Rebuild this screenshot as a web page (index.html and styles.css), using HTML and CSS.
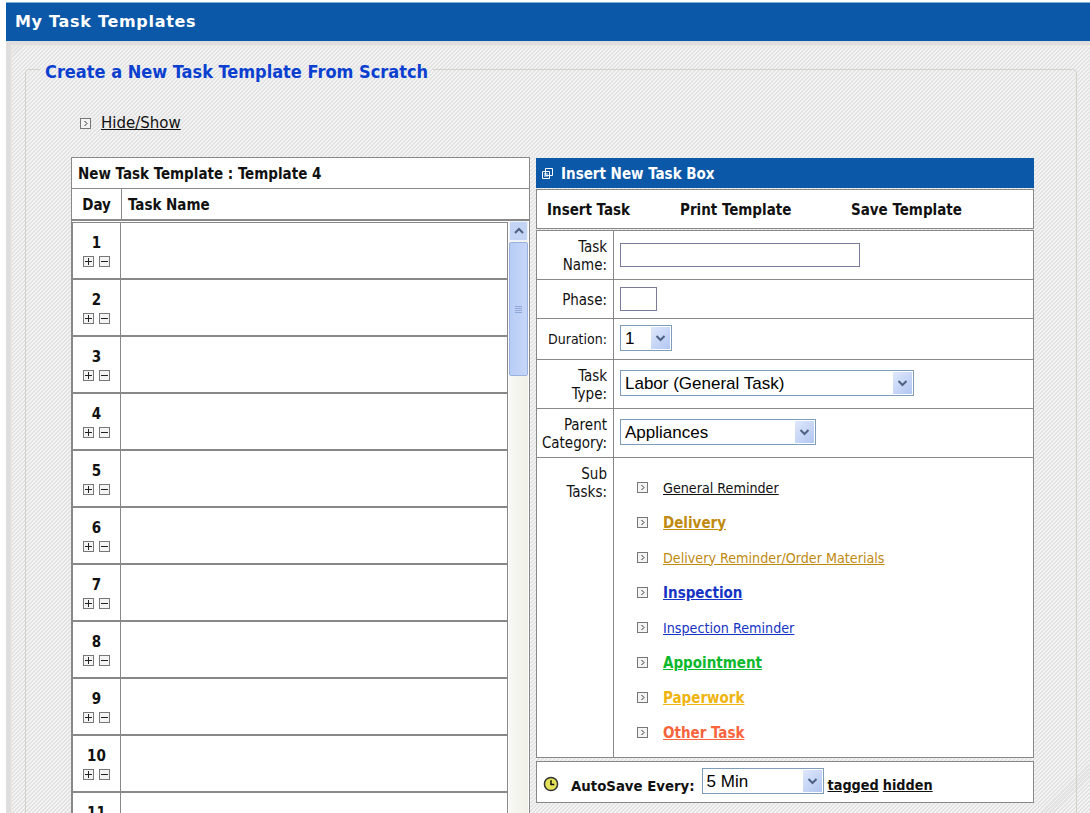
FILE: index.html
```html
<!DOCTYPE html>
<html lang="en">
<head>
  <meta charset="UTF-8">
  <title>My Task Templates</title>
  <link rel="stylesheet" href="styles.css">
</head>
<body>
  <svg width="0" height="0" class="defs">
    <symbol id="exp" viewBox="0 0 11 11"><rect x=".5" y=".5" width="10" height="10" fill="#f4f4f4" stroke="#777"/><path d="M4.5 3l2.5 2.5L4.5 8" fill="none" stroke="#333"/></symbol>
    <symbol id="plus" viewBox="0 0 11 11"><rect x=".5" y=".5" width="10" height="10" fill="#f4f4f4" stroke="#777"/><path d="M2 5.5h7M5.5 2v7" stroke="#222"/></symbol>
    <symbol id="minus" viewBox="0 0 11 11"><rect x=".5" y=".5" width="10" height="10" fill="#f4f4f4" stroke="#777"/><path d="M2 5.5h7" stroke="#222"/></symbol>
    <symbol id="down" viewBox="0 0 19 21"><path d="M5.5 8.5l4 4 4-4" fill="none" stroke="#4d6185" stroke-width="2"/></symbol>
  </svg>

  <div class="page">
    <h1 class="topbar">My Task Templates</h1>
    <div class="panel">
      <fieldset class="frame">
        <legend>Create a New Task Template From Scratch</legend>
        <div class="inner">
          <div class="hideshow">
            <svg class="ico"><use href="#exp"/></svg>
            <a href="#">Hide/Show</a>
          </div>

          <div class="columns">
            <div class="left">
              <div class="left-title">New Task Template : Template 4</div>
              <div class="left-head">
                <div class="head-day">Day</div>
                <div class="head-name">Task Name</div>
              </div>
              <div class="left-body">
                <div class="days" id="days"></div>
                <div class="scrollbar">
                  <div class="sb-up"><svg width="12" height="8" viewBox="0 0 12 8"><path d="M2 6l4-4 4 4" fill="none" stroke="#4d6185" stroke-width="2"/></svg></div>
                  <div class="sb-thumb"><span class="grip"></span></div>
                </div>
              </div>
            </div>

            <div class="right">
              <div class="box-title">
                <svg width="11" height="11" viewBox="0 0 11 11"><path d="M3.5.5h7v7h-7zM.5 3.5h7v7h-7z" fill="#0b58a8" stroke="#fff"/><path d="M2 6h4M2 8h4" stroke="#fff"/></svg>
                <span>Insert New Task Box</span>
              </div>
              <div class="toolbar">
                <span class="tool-a">Insert Task</span>
                <span class="tool-b">Print Template</span>
                <span>Save Template</span>
              </div>
              <div class="form">
                <div class="row row-name">
                  <label class="cap">Task<br>Name:</label>
                  <div class="val"><input class="txt-name" type="text"></div>
                </div>
                <div class="row row-phase">
                  <label class="cap">Phase:</label>
                  <div class="val"><input class="txt-phase" type="text"></div>
                </div>
                <div class="row row-dur">
                  <label class="cap">Duration:</label>
                  <div class="val">
                    <div class="select sel-dur"><select><option>1</option></select><svg class="arrow"><use href="#down"/></svg></div>
                  </div>
                </div>
                <div class="row row-name">
                  <label class="cap">Task<br>Type:</label>
                  <div class="val">
                    <div class="select sel-type"><select><option>Labor (General Task)</option></select><svg class="arrow"><use href="#down"/></svg></div>
                  </div>
                </div>
                <div class="row row-name">
                  <label class="cap">Parent<br>Category:</label>
                  <div class="val">
                    <div class="select sel-cat"><select><option>Appliances</option></select><svg class="arrow"><use href="#down"/></svg></div>
                  </div>
                </div>
                <div class="row row-sub">
                  <label class="cap">Sub<br>Tasks:</label>
                  <ul class="subtasks">
                    <li><svg class="ico"><use href="#exp"/></svg><a href="#" class="c-black">General Reminder</a></li>
                    <li><svg class="ico"><use href="#exp"/></svg><a href="#" class="c-gold b">Delivery</a></li>
                    <li><svg class="ico"><use href="#exp"/></svg><a href="#" class="c-gold">Delivery Reminder/Order Materials</a></li>
                    <li><svg class="ico"><use href="#exp"/></svg><a href="#" class="c-blue b">Inspection</a></li>
                    <li><svg class="ico"><use href="#exp"/></svg><a href="#" class="c-blue">Inspection Reminder</a></li>
                    <li><svg class="ico"><use href="#exp"/></svg><a href="#" class="c-green b">Appointment</a></li>
                    <li><svg class="ico"><use href="#exp"/></svg><a href="#" class="c-yellow b">Paperwork</a></li>
                    <li><svg class="ico"><use href="#exp"/></svg><a href="#" class="c-orange b">Other Task</a></li>
                  </ul>
                </div>
              </div>
              <div class="autosave">
                <svg class="clock" width="16" height="16" viewBox="0 0 17 17"><circle cx="8.5" cy="8.5" r="7" fill="#e4e25a" stroke="#333" stroke-width="1.6"/><path d="M8.5 4.5v4.5h3.5" fill="none" stroke="#111" stroke-width="1.6"/></svg>
                <span class="as-label">AutoSave Every:</span>
                <div class="select sel-save"><select><option>5 Min</option></select><svg class="arrow"><use href="#down"/></svg></div>
                <a href="#">tagged</a>
                <a href="#">hidden</a>
              </div>
            </div>
          </div>
        </div>
      </fieldset>
    </div>
  </div>

  <script>
    var html = '';
    for (var i = 1; i <= 12; i++) {
      html += '<div class="day"><div class="day-num"><b>' + i + '</b><span class="pm">' +
        '<svg class="ico"><use href="#plus"/></svg><svg class="ico"><use href="#minus"/></svg></span></div>' +
        '<div class="day-task"></div></div>';
    }
    document.getElementById('days').innerHTML = html;
  </script>
</body>
</html>
```

FILE: styles.css
```css
html, body { margin: 0; height: 813px; overflow: hidden; background: #fff; }
body { font-family: "DejaVu Sans Condensed", "DejaVu Sans", sans-serif; font-size: 14px; color: #111; }
a { color: inherit; }
.defs { position: absolute; }
.ico { width: 11px; height: 11px; display: block; flex: none; }

.page { margin: 2px 0 0 6px; background: #dedede; height: 811px; }
.topbar { margin: 0; padding-left: 9px; background: #0b58a8; border-top: 1px solid #7fb2d8; color: #fff; font: bold 16px/38px "DejaVu Sans", sans-serif; letter-spacing: .7px; }

.panel {
  margin: 4px 0 0 5px; padding: 0 13px 40px 13px; height: 800px;
  border-left: 1px solid #eee8dc; border-top: 1px solid #eee8dc;
  background: repeating-linear-gradient(135deg, #f4f4f4 0, #f4f4f4 1.41px, #e2e2e2 1.41px, #e2e2e2 2.83px);
}
.frame { margin: 9px 0 0 0; padding: 0; border: 1px solid #d2d2ca; border-radius: 4px; min-width: 0; }
.frame legend { margin-left: 14px; padding: 6px 5px 0; color: #0a3fd0; font-size: 18px; font-weight: bold; line-height: 22px; }
.inner { padding-left: 45px; }

.hideshow { display: flex; align-items: center; gap: 10px; margin: 30px 0 0 9px; height: 20px; font: 15px "DejaVu Sans", sans-serif; }

.columns { display: flex; gap: 6px; margin-top: 24px; }

.left { width: 457px; background: #fff; border: 1px solid #888; border-bottom: 0; flex: none; }
.left-title { height: 30px; line-height: 32px; padding-left: 6px; font-size: 15px; font-weight: bold; border-bottom: 1px solid #888; }
.left-head { display: flex; height: 30px; line-height: 32px; font-weight: bold; font-size: 15px; }
.head-day { width: 49px; text-align: center; border-right: 1px solid #888; }
.head-name { padding-left: 6px; }
.left-body { display: flex; border-top: 2px solid #888; padding-top: 1px; height: 700px; overflow: hidden; }
.days { width: 436px; flex: none; }
.day { display: flex; height: 55px; border: 1px solid #888; }
.day-num { width: 48px; flex: none; border-right: 1px solid #888; display: flex; flex-direction: column; align-items: center; padding-top: 12px; box-sizing: border-box; font-size: 15px; line-height: 17px; }
.pm { display: flex; gap: 5px; margin-top: 4px; }
.day-task { flex: 1; }

.scrollbar { width: 19px; margin: -1px 0 0 1px; background: linear-gradient(90deg, #f8f8f4, #f1f1ea); }
.sb-up { height: 20px; display: flex; align-items: center; justify-content: center; background: #c4d4f4; border: 1px solid #eef2fb; box-sizing: border-box; border-radius: 2px; }
.sb-thumb { margin-top: 1px; height: 134px; display: flex; align-items: center; justify-content: center; background: linear-gradient(90deg, #b9cdf5, #c6d6f8); border: 1px solid #98b1e0; border-radius: 2px; box-sizing: border-box; }
.grip { width: 7px; height: 7px; background: repeating-linear-gradient(180deg, #8fa8d8 0, #8fa8d8 1px, transparent 1px, transparent 2px); }

.right { width: 498px; flex: none; margin-top: 1px; }
.box-title { display: flex; align-items: center; gap: 8px; height: 30px; padding-left: 6px; background: #0b58a8; color: #fff; font-size: 15px; font-weight: bold; }
.box-title span { padding-top: 2px; }
.toolbar { display: flex; align-items: center; height: 38px; line-height: 20px; padding: 0 0 0 10px; margin-top: 1px; background: #fff; border: 1px solid #888; font-size: 15px; font-weight: bold; }
.toolbar span { padding-top: 2px; }
.tool-a { width: 133px; }
.tool-b { width: 171px; }

.form { margin-top: 1px; background: #fff; border: 1px solid #888; }
.row { display: flex; border-bottom: 1px solid #888; }
.row:last-child { border-bottom: 0; }
.row-name { height: 48px; }
.row-phase { height: 38px; }
.row-dur { height: 40px; }
.row-sub { height: 299px; }
.cap { width: 70px; padding: 7px 6px 0 0; flex: none; text-align: right; border-right: 1px solid #888; line-height: 18px; font-size: 15px; }
.row-phase .cap, .row-dur .cap { padding-top: 11px; }
.row-dur .cap { font-size: 14px; }
.val { display: flex; align-items: center; padding-left: 6px; }

input { box-sizing: border-box; border: 1px solid #7a7a9a; background: #fff; padding: 0; margin: 0; border-radius: 0; }
.txt-name { width: 240px; height: 24px; }
.txt-phase { width: 37px; height: 24px; }

.select { position: relative; height: 26px; box-sizing: border-box; border: 1px solid #7f9db9; background: #fff; margin-top: -2px; }
.select select { appearance: none; border: 0; outline: 0; width: 100%; height: 100%; padding: 0 0 0 4px; background: transparent; font: 17px "Liberation Sans", sans-serif; color: #000; display: block; }
.arrow { position: absolute; right: 1px; top: 1px; width: 19px; height: 22px; background: linear-gradient(135deg, #dfe8fb, #b2c6f2); pointer-events: none; }
.sel-dur { width: 52px; }
.sel-type { width: 294px; }
.sel-cat { width: 196px; }
.sel-save { width: 122px; }

.subtasks { list-style: none; margin: 0; padding: 12px 0 0 23px; font-size: 14.2px; }
.subtasks li { display: flex; align-items: center; gap: 15px; height: 35px; }
.b { font-weight: bold; font-size: 15px; }
.c-black { color: #111; }
.c-gold { color: #c08a10; }
.c-blue { color: #1634c4; }
.c-green { color: #0cb82c; }
.c-yellow { color: #f0b410; }
.c-orange { color: #f8643c; }

.autosave { display: flex; align-items: center; height: 40px; margin-top: 3px; padding-left: 6px; background: #fff; border: 1px solid #888; font-size: 14.3px; font-weight: bold; }
.clock { margin-top: 4px; }
.as-label { margin: 6px 7px 0 12px; font-size: 14.8px; }
.autosave a { margin: 6px 0 0 4px; }
```
